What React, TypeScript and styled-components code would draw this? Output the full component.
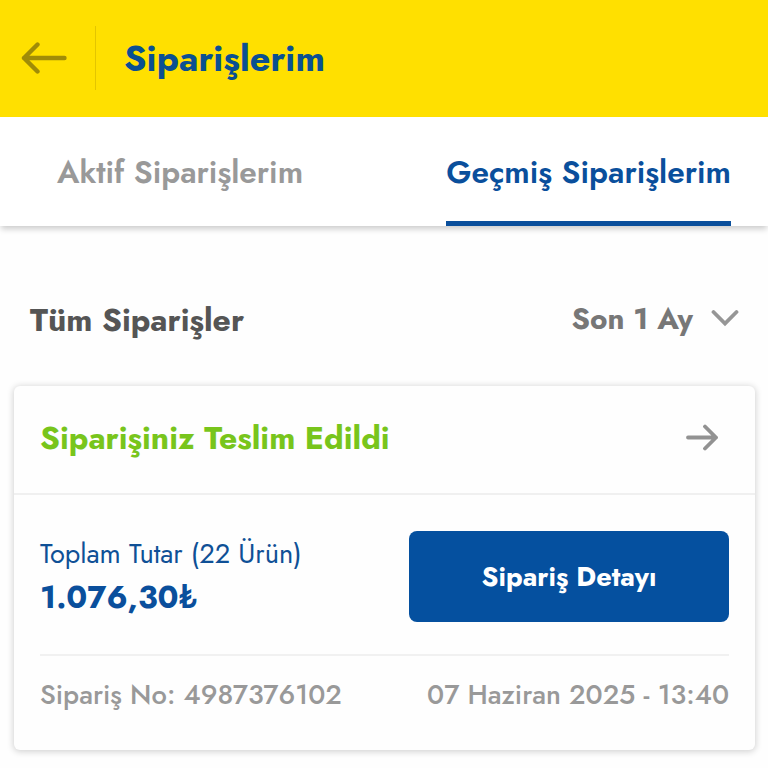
import React, { useState } from 'react';
import styled, { createGlobalStyle } from 'styled-components';

const GlobalStyle = createGlobalStyle`
  * {
    box-sizing: border-box;
  }
  body {
    margin: 0;
    background: #fefefe;
    font-family: Jost, Lato, 'Open Sans', sans-serif;
  }
  button {
    font-family: inherit;
    border: none;
    padding: 0;
    background: none;
    cursor: pointer;
  }
`;

const Page = styled.div`
  width: 768px;
  height: 768px;
  overflow: hidden;
  display: flex;
  flex-direction: column;
`;

const Header = styled.header`
  height: 117px;
  flex: none;
  padding: 0 20px 2px;
  display: flex;
  align-items: center;
  background: #ffe000;
`;

const BackButton = styled.button`
  display: flex;
  width: 48px;
`;

const HeaderLine = styled.div`
  width: 1px;
  height: 64px;
  margin: 0 28px 0 27px;
  background: #e3c500;
`;

interface TextProps {
  $size: number;
  $color: string;
  $weight?: number;
  $spacing?: number;
}

const Text = styled.span<TextProps>`
  margin: 0;
  font-size: ${(p) => p.$size}px;
  line-height: 40px;
  font-weight: ${(p) => p.$weight ?? 400};
  letter-spacing: ${(p) => p.$spacing ?? 0}px;
  color: ${(p) => p.$color};
  white-space: nowrap;
`;

const Tabs = styled.nav`
  height: 109px;
  flex: none;
  padding: 0 37px 0 57px;
  display: flex;
  justify-content: space-between;
  background: #fff;
  box-shadow: 0 4px 6px -1px rgba(0, 0, 0, 0.2);
`;

const Tab = styled.button<{ $active: boolean }>`
  display: flex;
  align-items: center;
  padding-top: 6px;
  border-bottom: 5px solid ${(p) => (p.$active ? '#0a4f9c' : 'transparent')};
`;

const ListHeader = styled.div`
  height: 160px;
  flex: none;
  padding: 28px 29px 0 30px;
  display: flex;
  align-items: center;
  justify-content: space-between;
`;

const Filter = styled.button`
  display: flex;
  align-items: center;
  gap: 18px;
  padding-bottom: 3px;

  svg {
    margin-top: -2px;
  }
`;

const Card = styled.section`
  width: 741px;
  height: 364px;
  flex: none;
  margin-left: 14px;
  border-radius: 6px;
  background: #fefefe;
  box-shadow: 0 1px 6px 1px rgba(0, 0, 0, 0.17);
`;

const CardHeader = styled.div`
  height: 109px;
  padding: 0 36px 4px 26px;
  display: flex;
  align-items: center;
  justify-content: space-between;
  border-bottom: 2px solid #f0f0f0;
`;

const CardBody = styled.div`
  padding: 0 26px;
`;

const Summary = styled.div`
  height: 161px;
  padding-top: 36px;
  display: flex;
  align-items: flex-start;
  justify-content: space-between;
  border-bottom: 2px solid #f1f1f1;
`;

const Totals = styled.div`
  display: flex;
  flex-direction: column;
  gap: 3px;
  padding-top: 3px;
`;

const DetailButton = styled.button`
  width: 320px;
  height: 91px;
  display: flex;
  align-items: center;
  justify-content: center;
  border-radius: 8px;
  background: #05509f;
`;

const Meta = styled.div`
  padding-top: 19px;
  display: flex;
  justify-content: space-between;
`;

const BackIcon = () => (
  <svg width="48" height="32" viewBox="0 0 48 32" fill="none" stroke="#a08c07" strokeWidth="4.400" strokeLinecap="round" strokeLinejoin="round">
    <path d="M44.500 16H4M17.500 2.500L4 16l13.500 13.500" />
  </svg>
);

const ArrowIcon = () => (
  <svg width="34" height="28" viewBox="0 0 34 28" fill="none" stroke="#929292" strokeWidth="3.800" strokeLinecap="round" strokeLinejoin="round">
    <path d="M3 13.500h28M20 2.500l11 11-11 11" />
  </svg>
);

const ChevronIcon = () => (
  <svg width="28" height="18" viewBox="0 0 28 18" fill="none" stroke="#969696" strokeWidth="3.800" strokeLinecap="round">
    <path d="M2.500 3L14 14.500 25.500 3" />
  </svg>
);

const tabs = [
  { id: 'active', label: 'Aktif Siparişlerim' },
  { id: 'past', label: 'Geçmiş Siparişlerim' },
];

const App = () => {
  const [selected, setSelected] = useState('past');

  return (
    <>
      <GlobalStyle />
      <Page>
        <Header>
          <BackButton aria-label="Geri">
            <BackIcon />
          </BackButton>
          <HeaderLine />
          <Text as="h1" $size={36} $weight={700} $spacing={0.1} $color="#0a5092">
            Siparişlerim
          </Text>
        </Header>
        <Tabs>
          {tabs.map((tab) => (
            <Tab key={tab.id} $active={tab.id === selected} onClick={() => setSelected(tab.id)}>
              <Text $size={31.5} $weight={600} $color={tab.id === selected ? '#0a4f9c' : '#999'}>
                {tab.label}
              </Text>
            </Tab>
          ))}
        </Tabs>
        <ListHeader>
          <Text $size={31.9} $weight={700} $color="#555">
            Tüm Siparişler
          </Text>
          <Filter>
            <Text $size={29.6} $weight={700} $color="#777">
              Son 1 Ay
            </Text>
            <ChevronIcon />
          </Filter>
        </ListHeader>
        <Card>
          <CardHeader>
            <Text $size={31.9} $weight={700} $color="#78c51c">
              Siparişiniz Teslim Edildi
            </Text>
            <ArrowIcon />
          </CardHeader>
          <CardBody>
            <Summary>
              <Totals>
                <Text $size={27.2} $color="#0f5096">
                  Toplam Tutar (22 Ürün)
                </Text>
                <Text $size={31.7} $weight={700} $color="#0a4f9c">
                  1.076,30₺
                </Text>
              </Totals>
              <DetailButton>
                <Text $size={27.1} $weight={700} $color="#fff">
                  Sipariş Detayı
                </Text>
              </DetailButton>
            </Summary>
            <Meta>
              <Text $size={27.3} $weight={500} $color="#999">
                Sipariş No: 4987376102
              </Text>
              <Text $size={27.3} $weight={500} $color="#999">
                07 Haziran 2025 - 13:40
              </Text>
            </Meta>
          </CardBody>
        </Card>
      </Page>
    </>
  );
};

export default App;
